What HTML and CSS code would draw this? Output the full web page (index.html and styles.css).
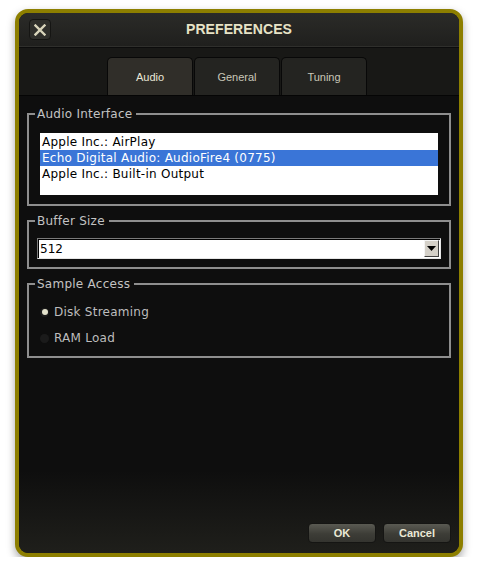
FILE: index.html
```html
<!DOCTYPE html>
<html>
<head>
<meta charset="utf-8">
<link rel="stylesheet" href="styles.css">
</head>
<body>
<div class="window">
  <div class="titlebar">
    <button class="close" aria-label="Close">
      <svg width="12" height="12" viewBox="0 0 12 12"><path d="M1.5 1.5 L10.5 10.5 M10.5 1.5 L1.5 10.5" stroke="#d9d5bb" stroke-width="2.4" stroke-linecap="square"/></svg>
    </button>
    <div class="title">PREFERENCES</div>
  </div>
  <div class="tabbar">
    <div class="tab active">Audio</div>
    <div class="tab">General</div>
    <div class="tab">Tuning</div>
  </div>
  <div class="content">
    <fieldset class="group audio">
      <legend>Audio Interface</legend>
      <div class="listbox">
        <div class="row">Apple Inc.: AirPlay</div>
        <div class="row selected">Echo Digital Audio: AudioFire4 (0775)</div>
        <div class="row">Apple Inc.: Built-in Output</div>
      </div>
    </fieldset>
    <fieldset class="group buffer">
      <legend>Buffer Size</legend>
      <div class="select">
        <span class="value">512</span>
        <span class="arrow"><svg width="9" height="5" viewBox="0 0 9 5"><path d="M0 0 H9 L4.5 5 Z" fill="#000"/></svg></span>
      </div>
    </fieldset>
    <fieldset class="group sample">
      <legend>Sample Access</legend>
      <div class="radio"><span class="dot on"></span><span>Disk Streaming</span></div>
      <div class="radio"><span class="dot"></span><span>RAM Load</span></div>
    </fieldset>
    <div class="spacer"></div>
    <div class="buttons">
      <button class="btn">OK</button>
      <button class="btn">Cancel</button>
    </div>
  </div>
</div>
</body>
</html>
```
FILE: styles.css
```css
html, body {
  margin: 0;
  padding: 0;
  background: #ffffff;
}
body {
  padding: 9px 0 0 15px;
}
.window {
  width: 440px;
  height: 540px;
  border: 4px solid #8d7f00;
  border-radius: 13px;
  background: #0e0e0e;
  box-shadow: 0 4px 9px rgba(0,0,0,0.35);
  display: flex;
  flex-direction: column;
  overflow: hidden;
  font-family: "Liberation Sans", Arial, sans-serif;
}
.titlebar {
  height: 34px;
  flex: none;
  background: linear-gradient(#2b2b28, #1f1f1d);
  border-bottom: 1px solid #0c0c0c;
  box-shadow: inset 0 -1px 0 #2f2f2c;
  display: flex;
  align-items: center;
  position: relative;
}
.close {
  position: absolute;
  left: 10px;
  top: 6px;
  width: 22px;
  height: 21px;
  padding: 0;
  border: 1px solid #151513;
  border-radius: 4px;
  background: #2f2f2b;
  display: flex;
  align-items: center;
  justify-content: center;
}
.title {
  flex: 1;
  text-align: center;
  color: #e7e3c6;
  font-weight: bold;
  font-size: 14px;
  letter-spacing: 0.1px;
  padding-bottom: 2px;
}
.tabbar {
  height: 48px;
  flex: none;
  background: #181816;
  display: flex;
  align-items: flex-end;
  padding-left: 88px;
  gap: 1px;
  border-bottom: 1px solid #050505;
  box-sizing: border-box;
}
.tab {
  width: 86px;
  height: 38px;
  box-sizing: border-box;
  border: 1px solid #080808;
  border-bottom: none;
  border-radius: 5px 5px 0 0;
  background: #242421;
  color: #c9c7b8;
  font-size: 11px;
  display: flex;
  align-items: center;
  justify-content: center;
}
.tab.active {
  background: #302e29;
  color: #e9e7d8;
}
.content {
  flex: 1;
  display: flex;
  flex-direction: column;
  padding: 11px 8px 9px 8px;
  background: linear-gradient(#0e0e0e 0%, #0e0e0e 82%, #1f1f1b 100%);
  font-family: "DejaVu Sans", Verdana, sans-serif;
}
.group {
  margin: 0;
  border: 2px solid #8e8e8e;
  padding: 0 11px;
  min-width: 0;
}
.group legend {
  color: #c3c3c3;
  font-size: 12px;
  line-height: 14px;
  padding: 0 4px 0 2px;
  margin-left: -5px;
  letter-spacing: 0.25px;
}
.buffer legend,
.sample legend {
  margin-left: -2px;
}
.audio {
  padding-top: 12px;
  padding-bottom: 9px;
}
.listbox {
  background: #ffffff;
  height: 62px;
  padding-top: 1px;
  box-sizing: border-box;
}
.row {
  height: 16px;
  line-height: 16px;
  font-size: 12px;
  color: #000;
  padding-left: 2px;
  letter-spacing: 0.25px;
}
.row.selected {
  background: #3a75d7;
  color: #ffffff;
}
.buffer {
  margin-top: 8px;
  padding: 10px 8px 8px 8px;
}
.select {
  height: 21px;
  box-sizing: border-box;
  background: #ffffff;
  border: 1px solid;
  border-color: #7a7a7a #e6e6e6 #e6e6e6 #7a7a7a;
  box-shadow: inset 1px 1px 0 #000;
  display: flex;
  align-items: center;
  justify-content: space-between;
  padding: 0 1px 0 2px;
}
.select .value {
  font-size: 12px;
  color: #000;
}
.select .arrow {
  width: 15px;
  height: 17px;
  box-sizing: border-box;
  background: #d4d0c8;
  border: 1px solid;
  border-color: #f4f4f4 #404040 #404040 #f4f4f4;
  display: flex;
  align-items: center;
  justify-content: center;
}
.sample {
  margin-top: 8px;
  padding: 8px 8px 8px 8px;
  height: 61px;
}
.radio {
  display: flex;
  align-items: center;
  gap: 5px;
  height: 26px;
  color: #bdbdbd;
  font-size: 12px;
  letter-spacing: 0.25px;
}
.dot {
  width: 9px;
  height: 9px;
  border-radius: 50%;
  background: #1b1b1b;
  margin-left: 3px;
  position: relative;
}
.dot.on::after {
  content: "";
  position: absolute;
  left: 1.5px;
  top: 1px;
  width: 6px;
  height: 6px;
  border-radius: 50%;
  background: #e4e2cc;
}
.spacer {
  flex: 1;
}
.buttons {
  display: flex;
  justify-content: flex-end;
  gap: 7px;
  padding-bottom: 1px;
}
.btn {
  width: 68px;
  height: 20px;
  border: 1px solid #151513;
  border-radius: 4px;
  background: linear-gradient(#5a5a52, #3d3d37 55%, #34342f);
  color: #ebe9d6;
  font-family: "Liberation Sans", Arial, sans-serif;
  font-weight: bold;
  font-size: 11px;
  padding: 0;
}
```
